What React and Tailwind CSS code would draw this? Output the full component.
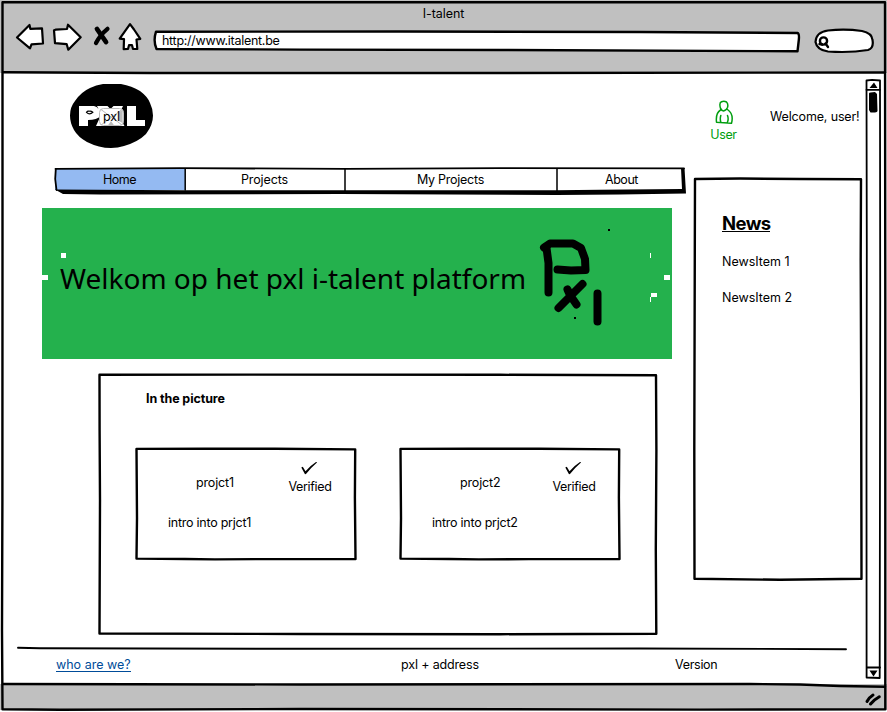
import React from "react";

// Decorative hand-drawn outline that sits on top of a box.
function Sketch({ box, children }) {
  return (
    <svg
      viewBox={box}
      preserveAspectRatio="none"
      className="pointer-events-none absolute inset-0 h-full w-full overflow-visible"
      fill="none"
      stroke="#000"
      strokeLinecap="round"
      strokeLinejoin="round"
      strokeWidth="2.4"
    >
      {children}
    </svg>
  );
}

function Glyph({ box, className, children }) {
  return (
    <svg
      viewBox={box}
      className={className}
      fill="#fff"
      stroke="#000"
      strokeWidth="2.2"
      strokeLinejoin="round"
      strokeLinecap="round"
    >
      {children}
    </svg>
  );
}

function Toolbar() {
  return (
    <header className="flex h-[73px] shrink-0 flex-col bg-[#c0c0c0]">
      <div className="mt-[6px] h-4 text-center leading-4">
        <span className="tracking-[-0.05px]">I-talent</span>
      </div>
      <div className="flex h-[32px] items-center pl-[14px]">
        <Glyph box="14 22 32 32" className="h-8 w-8">
          <path d="M17 37.5 29.5 25 30.3 28.8 42 28.3 43 43.5 31.5 44.3 30 48.3Z" />
        </Glyph>
        <Glyph box="52 22 32 32" className="ml-1.5 h-8 w-8">
          <path d="M54 30.2 55.5 29.7 67 29 68 24.7 80.7 37.3 68.3 49.7 66.7 44.2 55 43.2Z" />
        </Glyph>
        <Glyph box="92 22 20 32" className="ml-2 h-8 w-5">
          <path strokeWidth="4.8" d="M97 29 106 42" />
          <path strokeWidth="4.2" d="M107.5 28.8Q100 35 96 43" />
        </Glyph>
        <Glyph box="116 22 28 32" className="ml-1 h-8 w-7">
          <path d="M130 24.2 134 29.5 140.3 38.8 136.5 39.5 137.3 49 133 49 132 45.2 129 45.2 128 49 123.7 49.2 124 39.2 119.7 38.7Z" />
        </Glyph>
        <div className="relative ml-[10px] mt-[6px] flex h-[22px] w-[646px] items-center">
          <Sketch box="154 30 646 22">
            <path
              fill="#fff"
              d="M156 31.7 400 31.5 640 32 797.5 33Q799.5 33.5 798.8 40L797.5 51.3 500 50 300 49.6 156.5 49Q153 41 156 31.7Z"
            />
          </Sketch>
          <span className="relative mb-px ml-2 leading-4 tracking-[-0.28px]">http://www.italent.be</span>
        </div>
        <Glyph box="813 22 62 32" className="ml-[13px] h-8 w-[62px]">
          <path d="M815.5 42Q816 32 828 30.5 845 28.5 862 31 872 33 872.5 40 874 48 868 50 850 53 828 51.5 817 50 815.5 42Z" />
          <circle cx="823.5" cy="41" r="3.6" strokeWidth="2.4" />
          <path strokeWidth="2.4" d="M825.5 43.5 828 47M819.5 44 822 44.7" />
        </Glyph>
      </div>
    </header>
  );
}

function Logo() {
  return (
    <div className="relative ml-[70px] mt-[11px] flex h-16 w-[83px] items-center justify-center">
      <svg viewBox="70 84 83 64" className="absolute inset-0 h-16 w-[83px]">
        <path d="M103 84H121Q132 86 140 91 148 97 150 103 153 109 153 115.5 153 125 146 134 138 142 124 146 118 148 111 148 99 148 87 142 78 137 74 130 70 123 70 115.5 70 107 75 101 81 92 90 88 96 85 103 84Z" />
        <path
          fill="#fff"
          d="M79 106H94Q97 106.5 98.5 109L97 106H107.5L110.5 109 113.5 106H123L118.5 115.5 124.5 126H96L100.5 116Q97 120 88 120V126H79ZM127 106H136V120H145V126H127Z"
        />
        <path stroke="#000" strokeWidth="1.2" fill="none" d="M86.5 112.3Q87.5 110.8 89 111.2 91 110.6 92.8 112.3 89.5 115.5 86.5 112.3Z" />
        <rect x="99.5" y="108.5" width="24" height="17" rx="4" fill="#fff" fillOpacity=".93" stroke="#bbb" />
        <path d="M101 109.5 122 125M122 109.5 101 125" stroke="#bbb" />
        <path d="M107.5 126 111 121 114.5 126ZM119 112 122.5 110V123L119 121Z" fill="#bbb" />
      </svg>
      <span className="relative mt-0.5 leading-4">pxl</span>
    </div>
  );
}

function Nav() {
  return (
    <nav className="relative ml-[54px] mt-[19px] flex h-[27px] w-[632px] pl-px pt-px text-center leading-[23px]">
      <div className="h-[22px] w-[130px] bg-[#94baf2]"><span className="mr-px tracking-[-0.45px]">Home</span></div>
      <div className="w-[160px]"><span className="mr-px tracking-[-0.1px]">Projects</span></div>
      <div className="w-[212px]"><span className="mr-px tracking-[-0.25px]">My Projects</span></div>
      <div className="w-[129px]"><span className="tracking-[-0.45px]">About</span></div>
      <Sketch box="54 167 632 27">
        <path strokeWidth="1.8" d="M55.5 168.8 180 168.2 345 168.8 500 168.2 684 168.4" />
        <path strokeWidth="1.8" d="M55.8 169 55.2 179 56.5 190" />
        <path fill="#000" stroke="none" d="M55 189.5 180 190.3 345 190.2 556 190.2 600 189.8 682 189 681 168 684.5 168 686 193.5 620 194.5 557 195 340 194 100 194.5 63 194Z" />
        <path strokeWidth="1.5" d="M185.2 169V190M345 169V191M557 169V191" />
      </Sketch>
    </nav>
  );
}

function Banner() {
  return (
    <section className="relative ml-[42px] mt-[14px] flex h-[151px] w-[630px] items-center bg-[#24b14d]">
      <h1 className="mb-[11px] ml-[18px] whitespace-nowrap font-['Noto_Sans',sans-serif] text-[28px] leading-10">
        <span>Welkom op het pxl i-talent platform</span>
      </h1>
      <svg viewBox="42 208 630 151" className="pointer-events-none absolute inset-0 h-full w-full">
        <g fill="none" stroke="#000" strokeWidth="8" strokeLinecap="round" strokeLinejoin="round">
          <path d="M544 247.5 550 243.5H573L581 248 585 259 585.5 270 571 270.5 557.5 269.5" />
          <path d="M546.5 248 548.5 263V292.5M582.5 284 573 293.5 558.5 308M567.5 289.5 570 295 576.5 304.5M597.5 293.5V321.5" />
        </g>
        <path fill="#fff" d="M61 253h5v5h-5zM42 275h6v5h-6zM650 253h1v5h-1zM664 275h6v5h-6zM651 293h6v4h-6zM650 297h1v5h-1z" />
        <path d="M608 229h2v2h-2zM574 317h2v2h-2z" />
      </svg>
    </section>
  );
}

function ProjectCard({ name, intro }) {
  return (
    <article className="relative h-[112px] w-[222px] px-[33px] pt-[13px]">
      <Sketch box="0 0 222 112">
        <path d="M1.5 .9 70 .7 140 .8 220.2 1.4 219.9 50 220.5 111 130 111.1 80 111.4 50 111 1.5 110.6 2 70Z" />
      </Sketch>
      <div className="flex h-[34px] items-end justify-between">
        <h3 className="mb-1 ml-[28px] leading-4"><span className="tracking-[-0.15px]">{name}</span></h3>
        <div className="-mr-2 flex w-[44px] flex-col items-center">
          <svg viewBox="0 0 16 14" className="mr-[3px] h-[14px] w-4">
            <path d="M.3 5.5 1.8 4.8 4.5 9.3Q9 3.8 15.3 -.2L16 .4Q9.5 6 5 12L4 12.2Z" />
          </svg>
          <p className="mt-[3px] whitespace-nowrap leading-4"><span className="tracking-[-0.35px]">Verified</span></p>
        </div>
      </div>
      <p className="mt-[20px] leading-4"><span className="tracking-[-0.25px]">{intro}</span></p>
    </article>
  );
}

function Picture() {
  return (
    <section className="relative ml-[98px] mt-[15px] h-[261px] w-[560px] pl-[37px] pt-[17px]">
      <Sketch box="98 374 560 261">
        <path d="M99.5 374.8 250 374.6 500 374.8 656 375.2 656.4 450 655.8 550 656.3 633.8 500 634.2 300 634 99.5 633.5 100 500 99.6 430Z" />
      </Sketch>
      <h2 className="ml-[11px] font-bold leading-4"><span className="tracking-[-0.1px]">In the picture</span></h2>
      <div className="mt-[41px] flex gap-[42px]">
        <ProjectCard name="projct1" intro="intro into prjct1" />
        <ProjectCard name="projct2" intro="intro into prjct2" />
      </div>
    </section>
  );
}

function News() {
  return (
    <aside className="relative h-[402px] w-[169px] pl-[29px] pt-[32px]">
      <Sketch box="693 178 169 402">
        <path d="M695 179 740 178.5 800 179 861 179.2 860.7 260 861.2 400 861.5 578.7 780 579.8 694.5 578.7 694.3 450 694.8 250Z" />
      </Sketch>
      <h2 className="h-[22px] w-12 border-b border-black text-[18.5px] font-bold leading-[26px] tracking-[-0.6px]">
        <span>News</span>
      </h2>
      <ul>
        <li className="mt-[22px] leading-4"><span>NewsItem 1</span></li>
        <li className="mt-5 leading-4"><span>NewsItem 2</span></li>
      </ul>
    </aside>
  );
}

function UserBadge() {
  return (
    <div className="flex h-[105px] w-[173px]">
      <div className="ml-[16px] flex w-[29px] flex-col items-center pt-[26px] text-[#009e0f]">
        <svg viewBox="715 99 18 25" className="h-[25px] w-[18px]" fill="none" stroke="currentColor" strokeWidth="1.5" strokeLinecap="round" strokeLinejoin="round">
          <path d="M721 110Q718.5 103 721.5 101.8 724 100.8 726.5 102 728.5 104 727.5 107.5 726 110.8 723.5 111 721.5 110.8 720.5 108M720.5 110Q715.5 113 716.5 122.2L731.5 123.2Q734 114 727.5 109.5M720.8 115.5Q719.8 119 720.8 122M727.5 115.5Q728.8 119 727.5 122" />
        </svg>
        <p className="mt-[3px] leading-4"><span className="tracking-[-0.4px]">User</span></p>
      </div>
      <p className="ml-[32px] mt-[36px] whitespace-nowrap leading-4"><span className="tracking-[-0.15px]">Welcome, user!</span></p>
    </div>
  );
}

function Scrollbar() {
  return (
    <Glyph box="865 73 17 609" className="h-[609px] w-[17px] shrink-0">
      <path strokeWidth="1.8" d="M866.5 80.5 872 79.8 880 80.5 880.2 300 879.7 678 866.6 677.5 866.5 450 866.8 250Z" />
      <path strokeWidth="1.8" d="M866.5 89.8H880M867 667.5H880" />
      <path fill="#000" stroke="none" d="M869.5 88 874 82.5 877.5 88ZM869.5 670.5H877.5L873.5 676.5ZM869 93.5Q869 92 875 92L877 94 877.5 111Q877 113 870.5 112.5L869 110Z" />
    </Glyph>
  );
}

function Footer() {
  return (
    <footer className="relative mt-[12px] flex h-[36px] pt-[10px] leading-4">
      <Sketch box="0 647 865 36">
        <path strokeWidth="1.9" d="M18 647.8 40 648.3 300 648.8 640 648.5 846 649.2" />
      </Sketch>
      <a className="ml-[56px] w-[345px] text-[#004c99]">
        <span className="inline-block h-[15px] border-b border-[#004c99]">who are we?</span>
      </a>
      <p className="w-[274px]"><span className="tracking-[-0.15px]">pxl + address</span></p>
      <p><span className="tracking-[-0.3px]">Version</span></p>
    </footer>
  );
}

export default function App() {
  return (
    <div className="relative flex h-[712px] w-[887px] flex-col overflow-hidden bg-white font-['Inter',sans-serif] text-[12.5px] text-black">
      <Toolbar />
      <main className="flex h-[611px] shrink-0">
        <div className="w-[865px] shrink-0">
          <div className="flex h-[562px]">
            <div className="w-[693px] shrink-0">
              <Logo />
              <Nav />
              <Banner />
              <Picture />
            </div>
            <div className="w-[172px]">
              <UserBadge />
              <News />
            </div>
          </div>
          <Footer />
        </div>
        <Scrollbar />
      </main>
      <div className="h-[26px] shrink-0 bg-[#c0c0c0]" />
      <Sketch box="0 0 887 712">
        <path d="M2.5 2.3 885 2.3 885.3 300 885.3 709.3 700 709.6 300 709 60 709.8 2.5 709.3 2 630 2.4 500 2.5 250Z" />
        <path d="M3 72.3 150 73 500 73 885 72.5M3 684 300 684.5 750 684 800 684.5 840 686 885 686.8" />
        <path strokeWidth="3" d="M867 701.5Q869 697.5 873 695M870.5 704Q873.5 700 879.3 696.7" />
      </Sketch>
    </div>
  );
}
